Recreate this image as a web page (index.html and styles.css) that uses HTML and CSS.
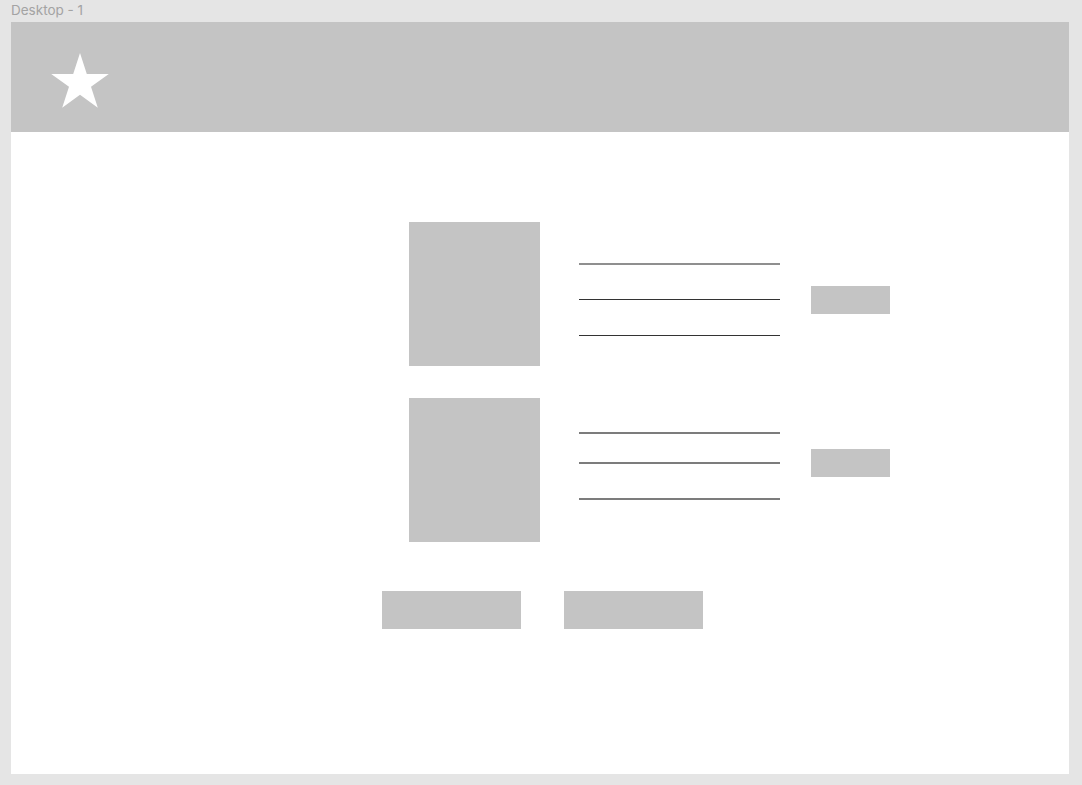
FILE: index.html
```html
<!DOCTYPE html>
<html>
<head>
    <meta name="viewport" content="width=device-width, initial-scale=1">
    <link rel="stylesheet" href="styles.css">
</head>

<body>
    <div class="label">Desktop - 1</div>

    <div class="frame">
        <header class="header">
            <svg class="logo" width="58" height="55" viewBox="0 0 58 55">
                <polygon fill="#fff"
                    points="29,0 35.8,20.9 57.8,20.9 40,33.8 46.8,54.7 29,41.8 11.2,54.7 18,33.8 0.2,20.9 22.2,20.9" />
            </svg>
        </header>

        <main class="content">
            <div class="row row-first">
                <div class="picture"></div>
                <div class="lines">
                    <div class="line soft"></div>
                    <div class="line"></div>
                    <div class="line"></div>
                </div>
                <div class="small-btn"></div>
            </div>

            <div class="row row-second">
                <div class="picture"></div>
                <div class="lines">
                    <div class="line mid"></div>
                    <div class="line mid"></div>
                    <div class="line mid"></div>
                </div>
                <div class="small-btn"></div>
            </div>

            <div class="actions">
                <div class="big-btn"></div>
                <div class="big-btn"></div>
            </div>
        </main>
    </div>
</body>
</html>
```

FILE: styles.css
```css
body {
    margin: 0;
    background-color: #e5e5e5;
    font-family: Inter, "Liberation Sans", sans-serif;
    width: 1082px;
    height: 785px;
    overflow: hidden;
}

.label {
    height: 22px;
    padding-left: 11px;
    font-size: 13.5px;
    line-height: 22px;
    color: #a3a3a3;
    margin-top: -1px;
    margin-bottom: 1px;
}

.frame {
    margin-left: 11px;
    width: 1058px;
    height: 752px;
    background-color: #fff;
}

.header {
    height: 110px;
    background-color: #c4c4c4;
    box-sizing: border-box;
    padding: 31px 0 0 40px;
}

.logo {
    display: block;
}

/* Основной блок */
.content {
    padding: 90px 0 0 371px;
}

.row {
    display: flex;
    margin-left: 27px;
}

.row-second {
    margin-top: 32px;
}

.picture {
    width: 131px;
    height: 144px;
    background-color: #c4c4c4;
}

.lines {
    width: 201px;
    margin-left: 39px;
    display: flex;
    flex-direction: column;
}

.line {
    height: 1px;
    background-color: #333;
}

.line.soft {
    height: 2px;
    background-color: #8f8f8f;
}

.line.mid {
    height: 2px;
    background-color: #7c7c7c;
}

.row-first .lines {
    padding-top: 41px;
    gap: 34px;
}

.row-first .line:nth-child(3) {
    margin-top: 1px;
}

.row-second .lines {
    padding-top: 34px;
    gap: 28px;
}

.row-second .line:nth-child(3) {
    margin-top: 6px;
}

.small-btn {
    width: 79px;
    height: 28px;
    margin-left: 31px;
    background-color: #c4c4c4;
}

.row-first .small-btn {
    margin-top: 64px;
}

.row-second .small-btn {
    margin-top: 51px;
}

.actions {
    display: flex;
    gap: 43px;
    margin-top: 49px;
}

.big-btn {
    width: 139px;
    height: 38px;
    background-color: #c4c4c4;
}
```
